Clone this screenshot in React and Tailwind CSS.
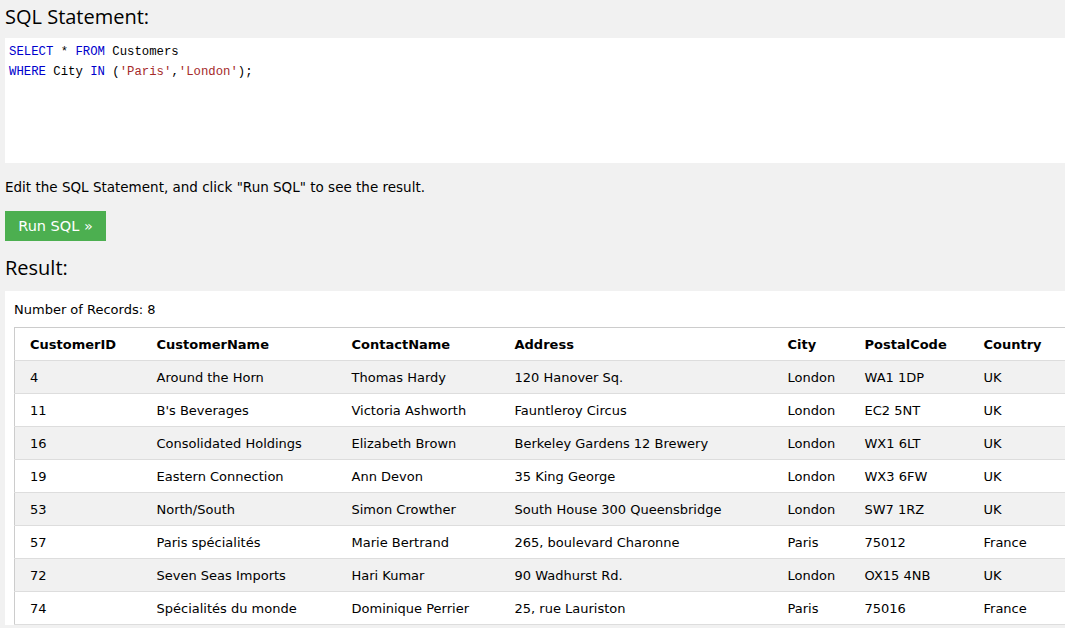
const rows = [
  ["4", "Around the Horn", "Thomas Hardy", "120 Hanover Sq.", "London", "WA1 1DP", "UK"],
  ["11", "B's Beverages", "Victoria Ashworth", "Fauntleroy Circus", "London", "EC2 5NT", "UK"],
  ["16", "Consolidated Holdings", "Elizabeth Brown", "Berkeley Gardens 12 Brewery", "London", "WX1 6LT", "UK"],
  ["19", "Eastern Connection", "Ann Devon", "35 King George", "London", "WX3 6FW", "UK"],
  ["53", "North/South", "Simon Crowther", "South House 300 Queensbridge", "London", "SW7 1RZ", "UK"],
  ["57", "Paris spécialités", "Marie Bertrand", "265, boulevard Charonne", "Paris", "75012", "France"],
  ["72", "Seven Seas Imports", "Hari Kumar", "90 Wadhurst Rd.", "London", "OX15 4NB", "UK"],
  ["74", "Spécialités du monde", "Dominique Perrier", "25, rue Lauriston", "Paris", "75016", "France"],
];

const headers = ["CustomerID", "CustomerName", "ContactName", "Address", "City", "PostalCode", "Country"];
const widths = ["w-[134px]", "w-[195px]", "w-[163px]", "w-[273px]", "w-[77px]", "w-[119px]", "w-[120px]"];

export default function App() {
  return (
    <div className="min-h-screen overflow-hidden bg-[#f1f1f1] font-['DejaVu_Sans',Verdana,sans-serif] text-[13px] text-black">
      <h2 className="ml-[5px] pt-[3px] font-['Open_Sans',sans-serif] text-[20px] leading-[28px]">SQL Statement:</h2>
      <div className="ml-[5px] mt-[7px] h-[125px] bg-white pl-[4px] pt-[4px] font-['Liberation_Mono',monospace] text-[12.3px] leading-[20px]">
        <div>
          <span className="text-[#0000cd]">SELECT</span> * <span className="text-[#0000cd]">FROM</span> Customers
        </div>
        <div>
          <span className="text-[#0000cd]">WHERE</span> City <span className="text-[#0000cd]">IN</span> (
          <span className="text-[#a52a2a]">'Paris'</span>,<span className="text-[#a52a2a]">'London'</span>);
        </div>
      </div>
      <p className="ml-[5px] mt-[15px] text-[13.5px] leading-[18px]">
        Edit the SQL Statement, and click "Run SQL" to see the result.
      </p>
      <button className="ml-[5px] mt-[15px] h-[30px] w-[101px] bg-[#4caf50] pt-[2px] text-[14.5px] text-white">
        Run SQL »
      </button>
      <h2 className="ml-[5px] mt-[13px] font-['Open_Sans',sans-serif] text-[20px] leading-[28px]">Result:</h2>
      <div className="ml-[5px] mt-[9px] bg-white pl-[9px] pt-[11px]">
        <div className="leading-[16px]">Number of Records: 8</div>
        <table className="mt-[9px] table-fixed border-collapse border border-[#cccccc] w-[1082px]">
          <thead>
            <tr className="border-b border-[#dddddd]">
              {headers.map((h, i) => (
                <th
                  key={h}
                  className={`${widths[i]} ${i === 0 ? "pl-[15px]" : "pl-[8px]"} pt-[9px] pb-[7px] text-left font-bold leading-[16px]`}
                >
                  {h}
                </th>
              ))}
            </tr>
          </thead>
          <tbody>
            {rows.map((r, ri) => (
              <tr key={r[0]} className={`border-b border-[#dddddd] ${ri % 2 === 0 ? "bg-[#f1f1f1]" : "bg-white"}`}>
                {r.map((c, i) => (
                  <td key={i} className={`${i === 0 ? "pl-[15px]" : "pl-[8px]"} pt-[9px] pb-[7px] leading-[16px] whitespace-nowrap`}>
                    {c}
                  </td>
                ))}
              </tr>
            ))}
          </tbody>
        </table>
      </div>
    </div>
  );
}
